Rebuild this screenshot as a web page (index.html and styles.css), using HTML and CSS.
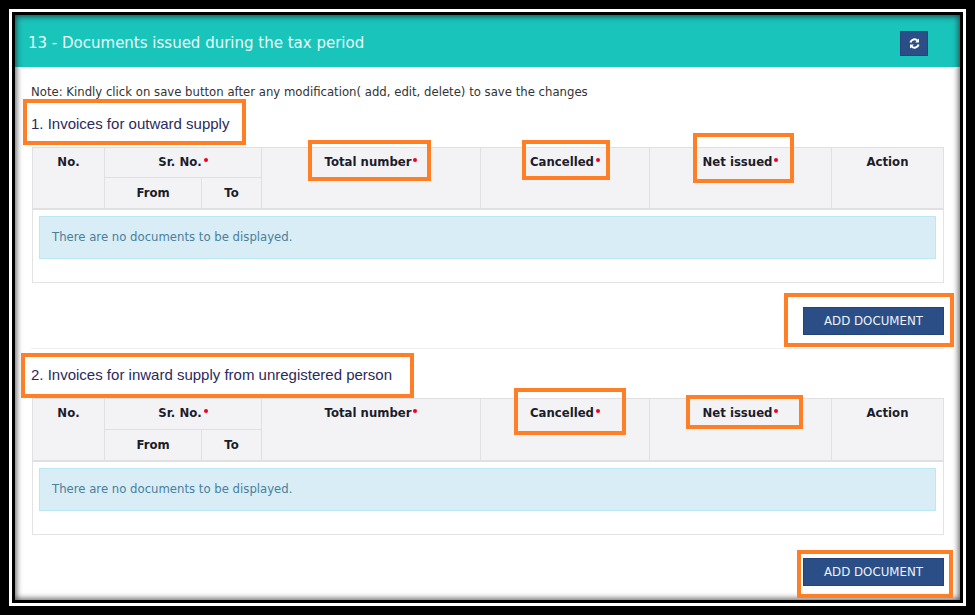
FILE: index.html
```html
<!DOCTYPE html>
<html lang="en">
<head>
<meta charset="utf-8">
<title>Documents issued during the tax period</title>
<link rel="stylesheet" href="styles.css">
</head>
<body>
<div class="frame-outer">
  <div class="frame-inner">
    <main class="panel">
      <header class="panel-head">
        <h1 class="panel-title">13 - Documents issued during the tax period</h1>
        <button class="refresh" type="button" aria-label="Refresh">
          <svg viewBox="0 0 12 12" width="11" height="11" aria-hidden="true">
            <path d="M1.6 5 A4.5 4.5 0 0 1 9.3 2.9" fill="none" stroke="#fff" stroke-width="2.3"/>
            <path d="M10.9 0.6 V4.8 H6.7 Z" fill="#fff"/>
            <path d="M10.4 7 A4.5 4.5 0 0 1 2.7 9.1" fill="none" stroke="#fff" stroke-width="2.3"/>
            <path d="M1.1 11.4 V7.2 H5.3 Z" fill="#fff"/>
          </svg>
        </button>
      </header>
      <div class="panel-body">
        <p class="note">Note: Kindly click on save button after any modification( add, edit, delete) to save the changes</p>

        <section class="doc-section first">
          <h2 class="doc-title">1. Invoices for outward supply</h2>
          <div class="table-box">
            <table class="doc-table">
              <colgroup>
                <col class="c-no"><col class="c-from"><col class="c-to"><col class="c-total"><col class="c-can"><col class="c-net"><col class="c-act">
              </colgroup>
              <thead>
                <tr class="row-a">
                  <th rowspan="2">No.</th>
                  <th colspan="2">Sr. No.<span class="req"></span></th>
                  <th rowspan="2">Total number<span class="req"></span></th>
                  <th rowspan="2">Cancelled<span class="req"></span></th>
                  <th rowspan="2">Net issued<span class="req"></span></th>
                  <th rowspan="2">Action</th>
                </tr>
                <tr class="row-b"><th>From</th><th>To</th></tr>
              </thead>
            </table>
            <div class="info">There are no documents to be displayed.</div>
          </div>
          <div class="actions"><button class="add" type="button">ADD DOCUMENT</button></div>
        </section>

        <section class="doc-section second">
          <h2 class="doc-title">2. Invoices for inward supply from unregistered person</h2>
          <div class="table-box">
            <table class="doc-table">
              <colgroup>
                <col class="c-no"><col class="c-from"><col class="c-to"><col class="c-total"><col class="c-can"><col class="c-net"><col class="c-act">
              </colgroup>
              <thead>
                <tr class="row-a">
                  <th rowspan="2">No.</th>
                  <th colspan="2">Sr. No.<span class="req"></span></th>
                  <th rowspan="2">Total number<span class="req"></span></th>
                  <th rowspan="2">Cancelled<span class="req"></span></th>
                  <th rowspan="2">Net issued<span class="req"></span></th>
                  <th rowspan="2">Action</th>
                </tr>
                <tr class="row-b"><th>From</th><th>To</th></tr>
              </thead>
            </table>
            <div class="info">There are no documents to be displayed.</div>
          </div>
          <div class="actions"><button class="add" type="button">ADD DOCUMENT</button></div>
        </section>
      </div>

      <div class="mark m-title1"></div>
      <div class="mark m-total1"></div>
      <div class="mark m-can1"></div>
      <div class="mark m-net1"></div>
      <div class="mark m-add1"></div>
      <div class="mark m-title2"></div>
      <div class="mark m-can2"></div>
      <div class="mark m-net2"></div>
      <div class="mark m-add2"></div>
    </main>
  </div>
</div>
</body>
</html>
```
FILE: styles.css
```css
* { box-sizing: border-box; }
html, body { margin: 0; height: 100%; }
body {
  width: 975px;
  height: 615px;
  background: #000;
  padding: 9px;
  overflow: hidden;
  font-family: "DejaVu Sans", Verdana, sans-serif;
}
.frame-outer {
  width: 957px;
  height: 597px;
  border: 3px solid #fff;
}
.frame-inner {
  width: 951px;
  height: 591px;
  border: 3px solid #000;
}
.panel {
  position: relative;
  width: 945px;
  height: 585px;
  background: #fff;
  overflow: hidden;
}
.panel::after {
  content: "";
  position: absolute;
  inset: 0;
  box-shadow: inset 0 0 6px 1px rgba(30, 30, 30, 0.8);
  pointer-events: none;
}
.panel-head {
  height: 52px;
  background: #19c4bb;
  display: flex;
  align-items: center;
  justify-content: space-between;
  padding: 0 32px 0 13px;
}
.panel-title {
  margin: 3px 0 0;
  font-size: 15px;
  font-weight: 400;
  color: #eafaf8;
}
.refresh {
  width: 28px;
  height: 25px;
  margin-top: 5px;
  padding: 0;
  background: #2c4e86;
  border: 1px solid #25457a;
  display: flex;
  align-items: center;
  justify-content: center;
}
.panel-body {
  padding: 0 16px;
}
.note {
  margin: 18px 0 0;
  font-size: 11.7px;
  line-height: 14px;
  color: #333;
}
.doc-title {
  margin: 0;
  font-family: "Liberation Sans", Arial, sans-serif;
  font-size: 15px;
  font-weight: 400;
  line-height: 18px;
  color: #2b2a5c;
}
.doc-section.first .doc-title { padding-top: 16px; height: 48px; }
.doc-section.second { border-top: 1px solid #eee; }
.doc-section.second .doc-title { padding-top: 17px; height: 49px; }
.table-box {
  margin-left: 1px;
  border: 1px solid #e3e3e3;
  border-top: 0;
  height: 136px;
}
.doc-section.second .table-box { height: 137px; }
.doc-table {
  width: calc(100% + 2px);
  margin: 0 -1px;
  table-layout: fixed;
  border-collapse: collapse;
}
.c-no { width: 72px; }
.c-from { width: 97px; }
.c-to { width: 60px; }
.c-total { width: 219px; }
.c-can { width: 169px; }
.c-net { width: 182px; }
.doc-table th {
  background: #f3f3f6;
  border: 1px solid #e0e0e2;
  font-size: 11.7px;
  font-weight: 700;
  line-height: 14px;
  color: #1c1c2a;
  text-align: center;
  vertical-align: top;
  padding: 7px 4px 0;
}
.doc-table thead { border-bottom: 2px solid #e0e0e2; }
.row-a { height: 30px; }
.row-b { height: 31px; }
.row-b th { padding-top: 8px; }
.second .row-a { height: 31px; }
.req {
  display: inline-block;
  width: 4px;
  height: 4px;
  margin-left: 2px;
  border-radius: 50%;
  background: #f0001c;
  vertical-align: 4px;
}
.info {
  margin: 6px 7px 0 6px;
  height: 43px;
  padding-left: 12px;
  background: #d9edf7;
  border: 1px solid #bce8f1;
  font-size: 11.7px;
  line-height: 41px;
  color: #4a7f9b;
}
.actions {
  display: flex;
  justify-content: flex-end;
  padding-top: 24px;
  height: 65px;
}
.second .actions { padding-top: 23px; }
.add {
  width: 141px;
  height: 28px;
  padding: 0;
  background: #2c4e86;
  border: 1px solid #23447a;
  color: #eef2fa;
  font-family: "DejaVu Sans", Verdana, sans-serif;
  font-size: 11.8px;
}
.mark {
  position: absolute;
  border: 4px solid #ff7f27;
  pointer-events: none;
  z-index: 2;
}
.m-title1 { left: 8px; top: 84px; width: 223px; height: 46px; }
.m-total1 { left: 293px; top: 125px; width: 123px; height: 41px; }
.m-can1 { left: 507px; top: 125px; width: 88px; height: 40px; }
.m-net1 { left: 678px; top: 118px; width: 101px; height: 50px; }
.m-add1 { left: 769px; top: 278px; width: 170px; height: 54px; }
.m-title2 { left: 6px; top: 338px; width: 393px; height: 45px; }
.m-can2 { left: 499px; top: 373px; width: 112px; height: 47px; }
.m-net2 { left: 671px; top: 380px; width: 117px; height: 34px; }
.m-add2 { left: 782px; top: 535px; width: 156px; height: 48px; }
```
